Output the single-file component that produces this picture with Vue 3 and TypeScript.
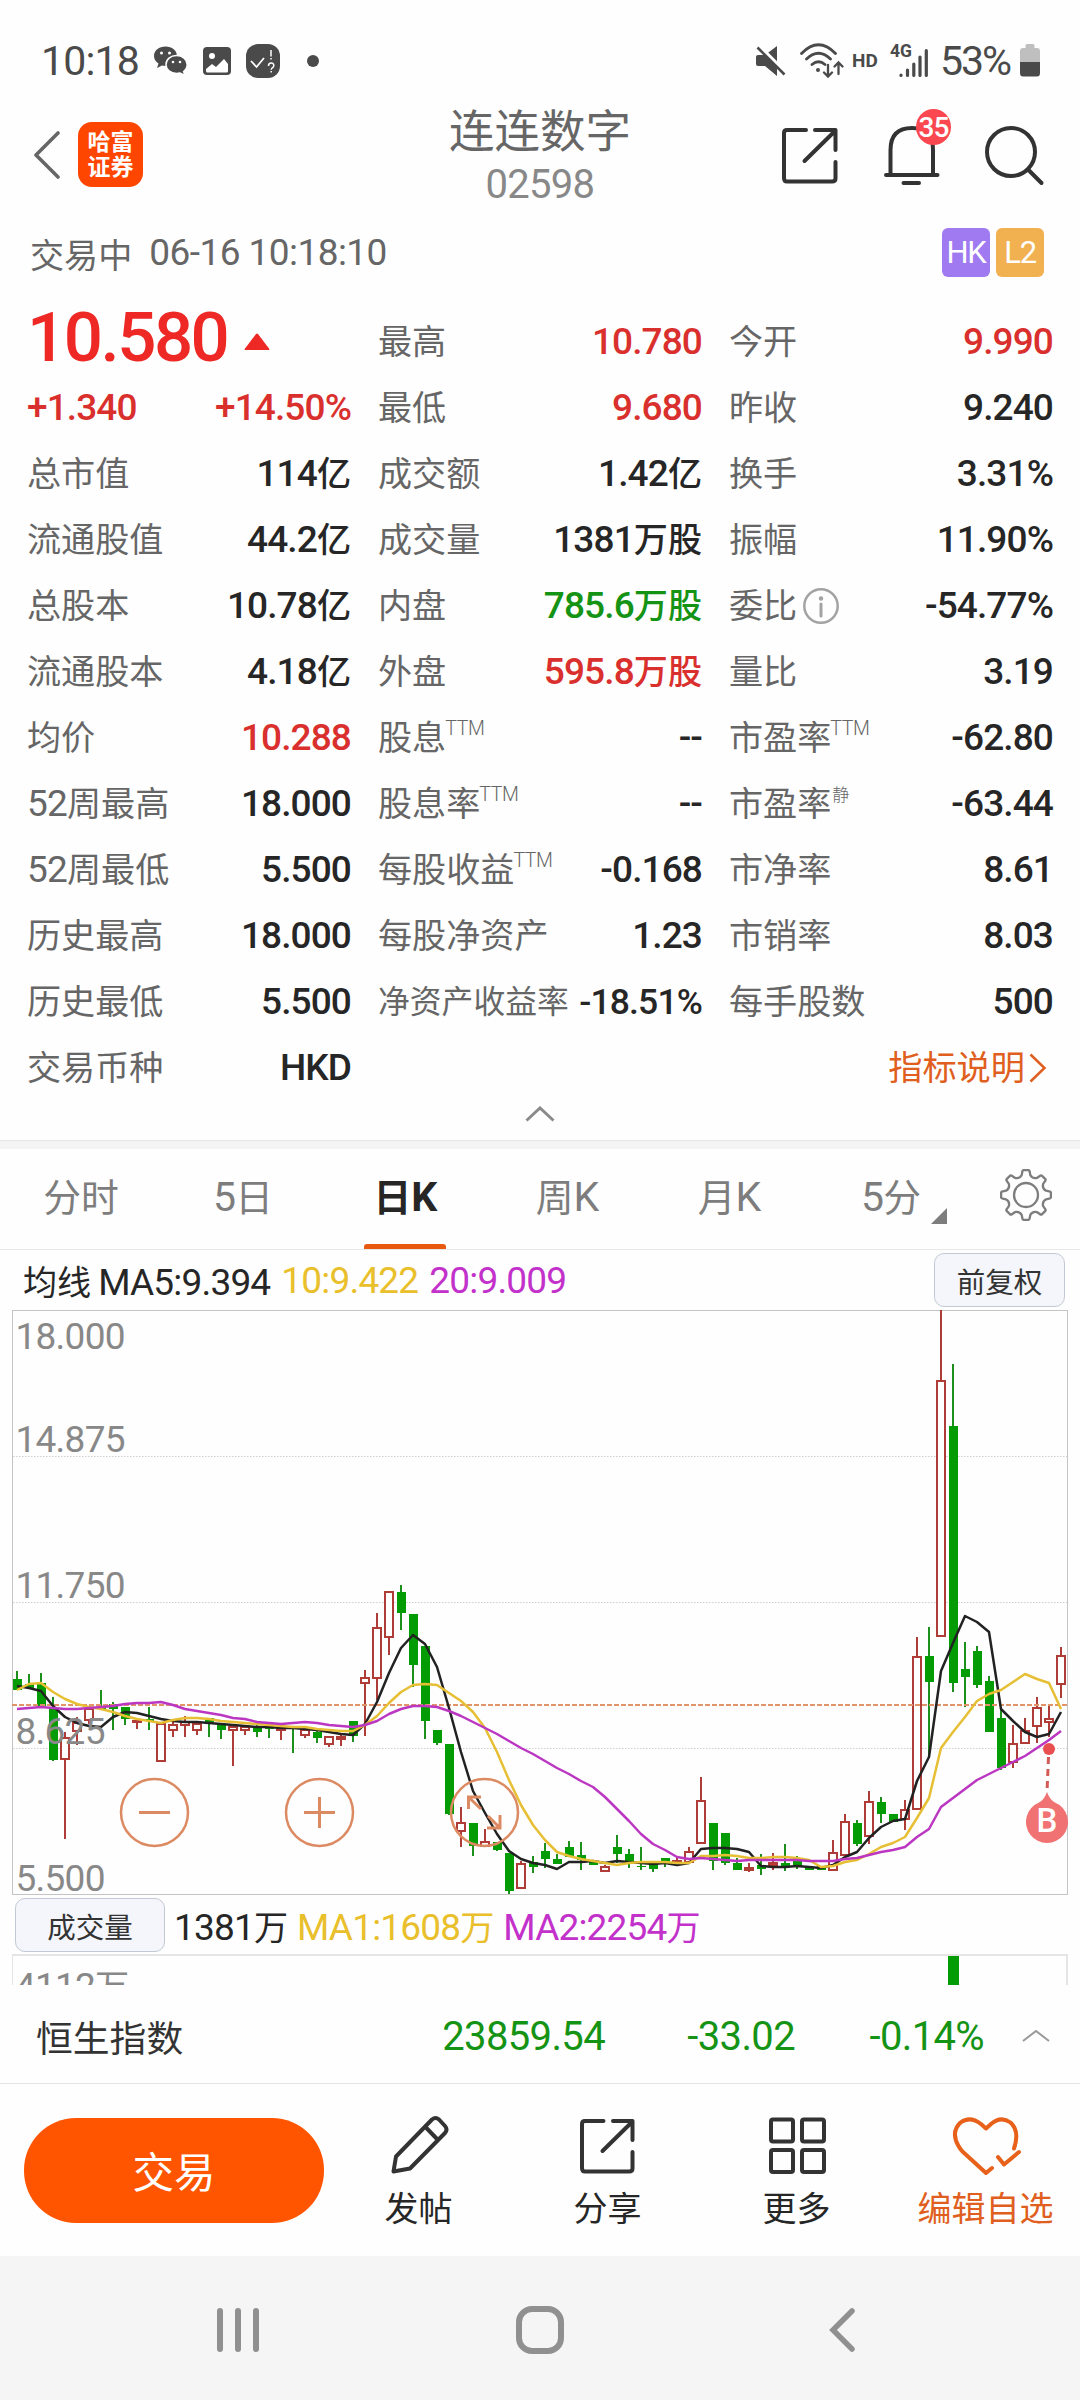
<script setup lang="ts">
import { h } from 'vue'

type Tone = 'up' | 'down' | ''
interface Cell {
  label: string
  sup?: string
  info?: boolean
  tight?: boolean
  value?: string
  tone?: Tone
}

/* Splits mixed text so that Han characters are set slightly smaller than Latin ones. */
const Mixed = (props: { t: string }) =>
  (props.t.match(/[\u2e80-\u9fff]+|[^\u2e80-\u9fff]+/g) ?? []).map((s) =>
    h('span', { class: /[\u2e80-\u9fff]/.test(s) ? 'zh' : 'en' }, s),
  )
Mixed.props = ['t']

const rows: Cell[][] = [
  [{ label: '总市值', value: '114亿' }, { label: '成交额', value: '1.42亿' }, { label: '换手', value: '3.31%' }],
  [{ label: '流通股值', value: '44.2亿' }, { label: '成交量', value: '1381万股' }, { label: '振幅', value: '11.90%' }],
  [{ label: '总股本', value: '10.78亿' }, { label: '内盘', value: '785.6万股', tone: 'down' }, { label: '委比', info: true, value: '-54.77%' }],
  [{ label: '流通股本', value: '4.18亿' }, { label: '外盘', value: '595.8万股', tone: 'up' }, { label: '量比', value: '3.19' }],
  [{ label: '均价', value: '10.288', tone: 'up' }, { label: '股息', sup: 'TTM', value: '--' }, { label: '市盈率', sup: 'TTM', value: '-62.80' }],
  [{ label: '52周最高', value: '18.000' }, { label: '股息率', sup: 'TTM', value: '--' }, { label: '市盈率', sup: '静', value: '-63.44' }],
  [{ label: '52周最低', value: '5.500' }, { label: '每股收益', sup: 'TTM', value: '-0.168' }, { label: '市净率', value: '8.61' }],
  [{ label: '历史最高', value: '18.000' }, { label: '每股净资产', value: '1.23' }, { label: '市销率', value: '8.03' }],
  [{ label: '历史最低', value: '5.500' }, { label: '净资产收益率', tight: true, value: '-18.51%' }, { label: '每手股数', value: '500' }],
]

const tabs = ['分时', '5日', '日K', '周K', '月K', '5分']

/* direction, high, body top, body bottom, low — offsets from the top of the plot */
type Candle = [string, number, number, number, number]
const candles: Candle[] = [
  ['g', 361, 369, 380, 380], ['g', 364, 374, 378, 378], ['g', 363, 373, 396, 396], ['g', 387, 399, 450, 451],
  ['r', 422, 427, 450, 529], ['r', 407, 412, 422, 435], ['r', 397, 398, 411, 414], ['g', 380, 397, 399, 399],
  ['g', 392, 394, 399, 420], ['g', 397, 397, 409, 415], ['R', 410, 410, 413, 419], ['g', 397, 409, 411, 420],
  ['r', 412, 413, 452, 452], ['r', 412, 414, 421, 427], ['r', 406, 411, 416, 427], ['r', 412, 413, 421, 425],
  ['g', 408, 408, 412, 427], ['g', 413, 414, 420, 429], ['r', 415, 416, 421, 456], ['r', 415, 416, 421, 425],
  ['g', 412, 417, 422, 427], ['g', 413, 417, 419, 428], ['r', 417, 417, 421, 430], ['g', 418, 418, 419, 443],
  ['r', 418, 419, 426, 428], ['g', 421, 422, 428, 433], ['r', 426, 426, 435, 437], ['r', 425, 426, 430, 436],
  ['g', 411, 411, 426, 432], ['r', 360, 367, 374, 426], ['r', 303, 317, 369, 390], ['r', 281, 281, 328, 345],
  ['g', 275, 282, 303, 320], ['g', 304, 304, 355, 377], ['g', 336, 336, 411, 429], ['g', 420, 420, 433, 435],
  ['g', 434, 434, 504, 505], ['r', 497, 512, 522, 537], ['g', 513, 513, 536, 546], ['r', 519, 531, 537, 537],
  ['g', 532, 532, 540, 541], ['g', 543, 543, 581, 584], ['r', 551, 553, 579, 579], ['g', 546, 552, 557, 563],
  ['g', 533, 541, 549, 558], ['g', 544, 549, 554, 554], ['g', 531, 537, 547, 547], ['g', 532, 545, 550, 560],
  ['g', 551, 551, 555, 555], ['r', 555, 556, 562, 562], ['g', 525, 537, 544, 553], ['g', 539, 544, 552, 558],
  ['g', 537, 556, 557, 560], ['g', 553, 554, 559, 562], ['g', 548, 548, 553, 557], ['R', 547, 550, 553, 553],
  ['r', 537, 541, 553, 553], ['r', 467, 490, 534, 534], ['g', 513, 513, 551, 560], ['g', 523, 523, 553, 555],
  ['g', 548, 553, 560, 560], ['R', 553, 557, 561, 562], ['g', 544, 555, 559, 565], ['R', 543, 552, 557, 560],
  ['g', 534, 553, 557, 561], ['g', 546, 550, 557, 559], ['g', 557, 557, 560, 560], ['g', 556, 556, 560, 560],
  ['r', 530, 542, 561, 561], ['r', 504, 511, 546, 546], ['g', 510, 513, 534, 536], ['r', 481, 491, 527, 534],
  ['g', 487, 492, 504, 513], ['g', 504, 504, 512, 512], ['r', 490, 499, 510, 520], ['r', 327, 346, 500, 500],
  ['g', 317, 346, 372, 447], ['r', 0, 70, 327, 327], ['g', 54, 116, 373, 382], ['g', 332, 359, 367, 397],
  ['g', 336, 341, 375, 378], ['g', 366, 371, 422, 422], ['g', 398, 408, 458, 460], ['r', 415, 433, 453, 458],
  ['r', 408, 420, 434, 434], ['r', 387, 397, 417, 433], ['r', 395, 408, 413, 427], ['r', 337, 345, 375, 388],
]

const ma5 = [376, 378, 381, 396, 407, 413, 416, 417, 407, 402, 403, 406, 409, 411, 412, 412, 413, 414, 415, 416, 417, 417, 418, 418, 419, 420, 422, 424, 425, 414, 392, 363, 338, 325, 334, 357, 398, 442, 481, 503, 524, 541, 549, 553, 555, 559, 552, 552, 551, 553, 551, 552, 553, 554, 553, 555, 553, 539, 538, 538, 539, 542, 556, 557, 557, 556, 557, 558, 555, 547, 542, 528, 517, 511, 509, 471, 447, 361, 333, 306, 312, 322, 399, 411, 422, 427, 424, 402]
const ma10 = [380, 374, 373, 382, 389, 394, 397, 399, 402, 406, 409, 411, 413, 410, 408, 408, 409, 411, 412, 413, 414, 415, 416, 417, 417, 419, 420, 421, 421, 415, 406, 393, 382, 375, 374, 375, 383, 391, 402, 418, 442, 470, 495, 515, 530, 542, 546, 549, 551, 553, 555, 553, 552, 552, 552, 553, 553, 546, 546, 545, 546, 548, 548, 547, 547, 548, 550, 557, 556, 552, 550, 544, 537, 533, 527, 508, 488, 438, 422, 407, 391, 384, 380, 372, 364, 369, 373, 399]
const ma20 = [399, 398, 397, 398, 399, 399, 398, 397, 396, 394, 393, 393, 392, 395, 399, 401, 403, 405, 408, 409, 412, 413, 414, 413, 412, 413, 415, 416, 417, 415, 411, 404, 399, 396, 396, 397, 401, 406, 412, 418, 424, 431, 438, 444, 451, 458, 464, 471, 477, 487, 499, 511, 524, 534, 540, 547, 549, 548, 549, 550, 551, 550, 550, 550, 550, 550, 551, 551, 551, 549, 548, 545, 542, 540, 537, 527, 519, 497, 488, 479, 470, 464, 458, 452, 446, 438, 430, 421]

const cx = (i: number) => 17 + 12 * i
const line = (v: number[]) => v.map((y, i) => `${cx(i)},${y}`).join(' ')

const axis = [
  { t: '18.000', y: 39 },
  { t: '14.875', y: 142 },
  { t: '11.750', y: 288 },
  { t: '8.625', y: 434 },
  { t: '5.500', y: 581 },
]

/* Eight-toothed gear outline centred on (26, 26) */
const gear = (() => {
  const p = (r: number, d: number) => {
    const a = (d * Math.PI) / 180
    return `${(26 + r * Math.sin(a)).toFixed(2)} ${(26 - r * Math.cos(a)).toFixed(2)}`
  }
  let d = ''
  for (let k = 0; k < 8; k++) {
    const a = k * 45
    d += `${k ? 'L' : 'M'}${p(20.5, a - 12)}L${p(23.5, a - 9)}Q${p(25.2, a - 8)} ${p(25, a - 5)}L${p(25, a + 5)}Q${p(25.2, a + 8)} ${p(23.5, a + 9)}L${p(20.5, a + 12)}Q${p(17.2, a + 22.5)} ${p(20.5, a + 33)}`
  }
  return d + 'Z'
})()
</script>

<template>
  <div class="screen">
    <header class="status">
      <span class="clock">10:18</span>
      <svg class="s-wechat" width="36" height="32" viewBox="0 0 36 32" fill="#4a4a4a">
        <path d="M12.500 1.500C6 1.500 1 5.600 1 11c0 3.200 1.700 5.800 4.500 7.500L4 23l5-2.500c1 .3 2.200.4 3.500.4C19 20.900 24 16.500 24 11S19 1.500 12.500 1.500Z" />
        <path d="M23.500 10.500c-6 0-10.500 4-10.500 9s4.500 9 10.500 9c1.200 0 2.400-.2 3.500-.5l5 2.500-1.400-4c2.200-1.700 3.600-4.200 3.600-7 0-5-4.700-9-10.700-9Z" stroke="#fff" stroke-width="1.500" />
        <g fill="#fff"><circle cx="8.500" cy="8" r="1.500" /><circle cx="16.500" cy="8" r="1.500" /><circle cx="20" cy="17" r="1.300" /><circle cx="27" cy="17" r="1.300" /></g>
      </svg>
      <svg class="s-pic" width="28" height="28" viewBox="0 0 28 28">
        <rect width="28" height="28" rx="4" fill="#4a4a4a" />
        <circle cx="9" cy="9" r="3" fill="#fff" />
        <path d="M3 22l6-5 4 3 8-8 4 5v7q0 1.500-1.500 1.500h-19Q3 25.500 3 24Z" fill="#fff" />
      </svg>
      <svg class="s-check" width="34" height="34" viewBox="0 0 34 34">
        <rect width="34" height="34" rx="12" fill="#4a4a4a" />
        <path d="M5 17l5.500 6L18 14" fill="none" stroke="#fff" stroke-width="1.800" />
        <path d="M25 6v6.500M25 14v1.600M22.500 22q0-3 2.700-3t2.600 2.700q0 1.300-1.600 2.300-1 .7-1 1.800M25.200 27v1.600" fill="none" stroke="#fff" stroke-width="1.500" />
      </svg>
      <i class="dot"></i>
      <div class="s-right">
        <svg class="s-mute" width="30" height="30" viewBox="0 0 30 30">
          <path d="M0 11q0-2 2-2h7L21 0v30L9 20H2q-2 0-2-2Z" fill="#4a4a4a" />
          <path d="M3 0L31 28" stroke="#fff" stroke-width="4" />
          <path d="M1.500 1.500L28.500 28.500" stroke="#4a4a4a" stroke-width="2.600" />
        </svg>
        <svg class="s-wifi" width="44" height="36" viewBox="0 0 44 36" fill="none" stroke="#4a4a4a" stroke-width="2.800" stroke-linecap="round">
          <path d="M1.500 10.500Q18.500-7 35.500 10.500M6.500 16q12-11.500 24 0M12 21.500q6.500-5.500 13 0" />
          <circle cx="18" cy="27" r="2" fill="#4a4a4a" stroke="none" />
          <path d="M28 22v11M24 29.500l4 4 4-4M38.500 31V20M34.500 23.500l4-4 4 4" stroke-width="2.300" />
        </svg>
        <span class="hd">HD</span>
        <div class="sig">
          <span class="g4">4G</span>
          <svg width="30" height="30" viewBox="0 0 30 30" stroke="#4a4a4a" stroke-width="3.200" stroke-linecap="round">
            <path d="M2 27v.5M8.500 22v5.500M14.800 16v11.500M21 9v18.500M27.300 2.500v25" />
          </svg>
        </div>
        <span class="pct">53%</span>
        <svg class="s-bat" width="20" height="33" viewBox="0 0 20 33">
          <path d="M5.500 1.500Q5.500 0 7 0h6q1.500 0 1.500 1.500V4H17q3 0 3 3v11H0V7q0-3 3-3h2.500Z" fill="#bfbfbf" />
          <path d="M0 18h20v11q0 3.500-3 3.500H3Q0 32.500 0 29Z" fill="#4a4a4a" />
        </svg>
      </div>
    </header>

    <nav class="head">
      <div class="h-left">
        <svg width="28" height="48" viewBox="0 0 28 48" fill="none" stroke="#666" stroke-width="3.600" stroke-linecap="round" stroke-linejoin="round"><path d="M25 2L3 24l22 22" /></svg>
        <div class="logo"><span>哈富</span><span>证券</span></div>
      </div>
      <div class="h-title">
        <div class="name">连连数字</div>
        <div class="code">02598</div>
      </div>
      <div class="h-right">
        <svg width="56" height="56" viewBox="0 0 56 56" fill="none" stroke="#333" stroke-width="4" stroke-linecap="round" stroke-linejoin="round"><path d="M24 2H5Q2 2 2 5V50q0 3.500 3 3.500H50q3.500 0 3.500-3V34M33 2H53.500V22M53 3L22.500 33" /></svg>
        <div class="bell">
          <svg width="56" height="60" viewBox="0 0 56 60" fill="none" stroke="#333" stroke-width="4" stroke-linecap="round"><path d="M6.500 49V24Q6.500 2 28 2T49 24V49M2 49H53.500M19.500 57H35" /></svg>
          <span class="count">35</span>
        </div>
        <svg width="60" height="60" viewBox="0 0 60 60" fill="none" stroke="#333" stroke-width="4" stroke-linecap="round"><circle cx="26" cy="26" r="24" /><path d="M43.500 44L56.500 57" /></svg>
      </div>
    </nav>

    <div class="when">
      <Mixed t="交易中" /><span class="stamp">06-16 10:18:10</span>
      <div class="badges"><b class="hk">HK</b><b class="l2">L2</b></div>
    </div>

    <section class="quote">
      <div class="row">
        <div class="cell price">
          <span class="last">10.580</span>
          <svg width="26" height="18" viewBox="0 0 26 18"><path d="M1.500 17Q0 17 1 15.500L12 1q1-1 2 0L25 15.500q1 1.500-.5 1.500Z" fill="#ee2825" /></svg>
        </div>
        <div class="cell"><span class="label">最高</span><span class="value up"><Mixed t="10.780" /></span></div>
        <div class="cell"><span class="label">今开</span><span class="value up"><Mixed t="9.990" /></span></div>
      </div>
      <div class="row">
        <div class="cell"><span class="value up"><Mixed t="+1.340" /></span><span class="value up"><Mixed t="+14.50%" /></span></div>
        <div class="cell"><span class="label">最低</span><span class="value up"><Mixed t="9.680" /></span></div>
        <div class="cell"><span class="label">昨收</span><span class="value"><Mixed t="9.240" /></span></div>
      </div>
      <div v-for="(r, i) in rows" :key="i" class="row">
        <div v-for="c in r" :key="c.label" class="cell" :class="{ tight: c.tight }">
          <span class="label"><Mixed :t="c.label" /><span v-if="c.sup" class="sup" :class="{ han: c.sup === '静' }">{{ c.sup }}</span><svg v-if="c.info" class="info" width="36" height="36" viewBox="0 0 36 36" fill="none" stroke="#a3a3a3" stroke-width="2.500"><circle cx="18" cy="18" r="16.700" /><path d="M18 16v12" stroke-width="3" stroke-linecap="round" /><circle cx="18" cy="10.500" r="2.200" fill="#a3a3a3" stroke="none" /></svg></span>
          <span class="value" :class="c.tone"><Mixed :t="c.value ?? ''" /></span>
        </div>
      </div>
      <div class="row">
        <div class="cell"><span class="label">交易币种</span><span class="value"><Mixed t="HKD" /></span></div>
        <div class="cell"></div>
        <div class="cell explain">
          <span>指标说明</span>
          <svg width="18" height="30" viewBox="0 0 18 30" fill="none" stroke="#e05f20" stroke-width="2.500"><path d="M1.500 1.500L15.500 15L1.500 28.500" /></svg>
        </div>
      </div>
      <div class="fold">
        <svg width="30" height="16" viewBox="0 0 30 16" fill="none" stroke="#8a8a8a" stroke-width="3"><path d="M1.500 14.500L15 2L28.500 14.500" /></svg>
      </div>
    </section>

    <div class="tabs">
      <div v-for="t in tabs" :key="t" class="tab" :class="{ on: t === '日K' }">
        <Mixed :t="t" />
        <svg v-if="t === '5分'" class="corner" width="16" height="16" viewBox="0 0 16 16"><path d="M16 0V16H0Z" fill="#7d7d7d" /></svg>
      </div>
      <div class="gear">
        <svg width="52" height="52" viewBox="0 0 52 52" fill="none" stroke="#7d7d7d" stroke-width="2.300" stroke-linejoin="round"><path :d="gear" /><circle cx="26" cy="26" r="12" /></svg>
      </div>
    </div>

    <div class="legend">
      <span class="k"><Mixed t="均线" /><span class="en sp">MA5:9.394</span></span>
      <span class="en y">10:9.422</span>
      <span class="en m">20:9.009</span>
      <button class="pill adj">前复权</button>
    </div>

    <svg class="plot" width="1080" height="586" viewBox="0 0 1080 586">
      <rect x="12.500" y="0.500" width="1055" height="584" fill="none" stroke="#c4c4c4" />
      <g stroke="#cfcfcf" stroke-dasharray="1.500 1.500"><path d="M13 146.500H1067M13 292.500H1067M13 438.500H1067" /></g>
      <g v-for="(c, i) in candles" :key="i">
        <template v-if="c[0] === 'g'">
          <rect :x="cx(i) - 1" :y="c[1]" width="2" :height="c[4] - c[1]" fill="#1c8f1c" />
          <rect :x="cx(i) - 4" :y="c[2]" width="9" :height="c[3] - c[2]" fill="#049c04" />
        </template>
        <template v-else>
          <rect :x="cx(i) - 1" :y="c[1]" width="2" :height="c[2] - c[1]" fill="#b03c38" />
          <rect :x="cx(i) - 1" :y="c[3]" width="2" :height="c[4] - c[3]" fill="#b03c38" />
          <rect :x="cx(i) - 4" :y="c[2] + 1" width="8" :height="c[3] - c[2] - 2" :fill="c[0] === 'R' ? '#c93531' : '#fff'" stroke="#b03c38" stroke-width="2" />
        </template>
      </g>
      <path d="M12 395H1067" stroke="#e09468" stroke-width="2" stroke-dasharray="5 2" />
      <g fill="none" stroke-width="2.500" stroke-linejoin="round">
        <polyline :points="line(ma5)" stroke="#222" />
        <polyline :points="line(ma10)" stroke="#e6bf35" />
        <polyline :points="line(ma20)" stroke="#bb37c2" />
      </g>
      <text v-for="a in axis" :key="a.t" x="15.500" :y="a.y" class="tick">{{ a.t }}</text>
      <g fill="none" stroke="#dc8a62" stroke-width="2.500">
        <circle cx="154.500" cy="502.500" r="33.500" />
        <path d="M139 502.500H170" stroke-width="3" />
        <circle cx="319.500" cy="502.500" r="33.500" />
        <path d="M304 502.500H335M319.500 487V518" stroke-width="3" />
        <circle cx="484.500" cy="502.500" r="33.500" />
        <path d="M468.500 499V487H481M469.500 488L481 499M500 505V518H487M499 517L488 506" stroke-width="3" />
      </g>
      <circle cx="1049" cy="439" r="6" fill="#e94f4f" />
      <path d="M1048.500 447L1047 482" stroke="#d35a55" stroke-width="3" stroke-dasharray="7 5" />
      <path d="M1047 482Q1050 490 1055 492.500A21 21 0 1 1 1039 492.500Q1044 490 1047 482Z" fill="#f07272" />
      <text x="1047" y="522" class="mark">B</text>
    </svg>

    <div class="legend vol">
      <button class="pill">成交量</button>
      <span class="k"><Mixed t="1381万" /></span>
      <span class="y"><Mixed t="MA1:1608万" /></span>
      <span class="m"><Mixed t="MA2:2254万" /></span>
    </div>

    <div class="volplot">
      <span class="cap"><Mixed t="4112万" /></span>
      <i class="bar"></i>
    </div>

    <div class="index">
      <span class="iname">恒生指数</span>
      <span class="n1">23859.54</span>
      <span class="n2">-33.02</span>
      <span class="n3">-0.14%</span>
      <svg width="28" height="14" viewBox="0 0 28 14" fill="none" stroke="#999" stroke-width="2"><path d="M1 12L14 2L27 12" /></svg>
    </div>

    <footer class="actions">
      <button class="trade">交易</button>
      <div class="act">
        <svg width="60" height="62" viewBox="0 0 60 62" fill="none" stroke="#333" stroke-width="4" stroke-linejoin="round"><path d="M4.500 57.500L7 42.500L43 5.500Q46.500 2.500 50 5.500L56 12Q59 15.500 56 19L21 54.500ZM36 12.500L48.500 25.500" /></svg>
        <span>发帖</span>
      </div>
      <div class="act">
        <svg width="60" height="62" viewBox="0 0 60 62" fill="none" stroke="#333" stroke-width="4" stroke-linecap="round" stroke-linejoin="round"><path d="M25.500 7H7Q4 7 4 10V54q0 3.500 3 3.500H51q3.500 0 3.500-3V38M35 7H54.500V26M54 8L24.500 37" /></svg>
        <span>分享</span>
      </div>
      <div class="act">
        <svg width="60" height="62" viewBox="0 0 60 62" fill="none" stroke="#333" stroke-width="4"><rect x="4" y="5.500" width="22" height="22" rx="2" /><rect x="35" y="5.500" width="22" height="22" rx="2" /><rect x="4" y="36" width="22" height="22" rx="2" /><rect x="35" y="36" width="22" height="22" rx="2" /></svg>
        <span>更多</span>
      </div>
      <div class="act hot">
        <svg width="72" height="62" viewBox="0 0 72 62" fill="none" stroke="#e8611a" stroke-width="4" stroke-linecap="round" stroke-linejoin="round"><path d="M64 34.500Q70 17 60.500 8.500Q51 1.500 41 10L36 14.500L31 10Q20 1.500 10.500 8.500Q.5 18 8.500 32Q10 35 13 38L36 59L42 54M48 43L54 50.500L69 38" /></svg>
        <span>编辑自选</span>
      </div>
    </footer>

    <div class="sysnav">
      <svg width="44" height="48" viewBox="0 0 44 48" stroke="#909090" stroke-width="6" stroke-linecap="round"><path d="M4 5V43M22 5V43M40 5V43" /></svg>
      <svg width="50" height="50" viewBox="0 0 50 50" fill="none" stroke="#909090" stroke-width="6"><rect x="4" y="4" width="42" height="42" rx="13" /></svg>
      <svg class="s-back" width="32" height="48" viewBox="0 0 32 48" fill="none" stroke="#909090" stroke-width="5.500" stroke-linecap="round" stroke-linejoin="miter"><path d="M26 5L7 24L26 43" /></svg>
    </div>
  </div>
</template>

<style>
body {
  background: #fff;
}
.zh {
  font-size: 0.922em;
}
.en {
  letter-spacing: -0.022em;
}
</style>

<style scoped>
.screen {
  width: 1080px;
  height: 2400px;
  overflow: hidden;
  display: flex;
  flex-direction: column;
  background: #fefefe;
  color: #666;
  font-family: Roboto, 'Noto Sans CJK SC', sans-serif;
  font-size: 37px;
  white-space: pre;
}
svg {
  flex: none;
  display: block;
}
button {
  font-family: inherit;
  border: 0;
  padding: 0;
}

.status {
  height: 100px;
  padding: 21px 40px 0 41px;
  box-sizing: border-box;
  display: flex;
  align-items: center;
  color: #4a4a4a;
}
.clock {
  font-size: 41px;
  letter-spacing: -0.02em;
  width: 112px;
}
.s-pic {
  margin-left: 14px;
}
.s-check {
  margin-left: 15px;
}
.dot {
  width: 12px;
  height: 12px;
  border-radius: 50%;
  background: #4a4a4a;
  margin-left: 27px;
}
.s-right {
  margin-left: auto;
  display: flex;
  align-items: center;
}
.s-wifi {
  margin-left: 14px;
}
.hd {
  font-size: 19px;
  font-weight: 700;
  margin-left: 8px;
  width: 38px;
}
.sig {
  position: relative;
  width: 39px;
  height: 34px;
  display: flex;
  align-items: flex-end;
  justify-content: flex-end;
}
.g4 {
  position: absolute;
  left: 0;
  top: -3px;
  font-size: 17.500px;
  line-height: 20px;
  font-weight: 700;
}
.pct {
  font-size: 41px;
  letter-spacing: -0.05em;
  margin-left: 11px;
  width: 80px;
}

.head {
  height: 112px;
  display: flex;
  justify-content: space-between;
}
.h-left,
.h-right {
  width: 300px;
  display: flex;
  align-items: center;
}
.h-left {
  padding: 0 0 3px 33px;
  box-sizing: border-box;
}
.logo {
  margin-left: 17px;
  width: 65px;
  height: 65px;
  border-radius: 14px;
  background: #ff4600;
  color: #fff;
  font-size: 23px;
  font-weight: 700;
  line-height: 25px;
  display: flex;
  flex-direction: column;
  align-items: center;
  justify-content: center;
}
.h-title {
  text-align: center;
}
.name {
  font-size: 45.500px;
  line-height: 52px;
  padding-top: 7px;
}
.code {
  font-size: 40px;
  line-height: 52px;
  letter-spacing: -0.018em;
  color: #888;
}
.h-right {
  justify-content: flex-end;
  padding-right: 35px;
  box-sizing: border-box;
  gap: 46px;
}
.bell {
  position: relative;
  margin-right: -1px;
}
.count {
  position: absolute;
  left: 32px;
  top: -17px;
  width: 35px;
  height: 36px;
  border-radius: 50%;
  background: #fb4850;
  color: #fff;
  font-size: 28px;
  font-weight: 500;
  line-height: 37px;
  letter-spacing: -0.03em;
  text-align: center;
}

.when {
  height: 84px;
  box-sizing: border-box;
  padding: 0 36px 3px 30px;
  display: flex;
  align-items: center;
}
.stamp {
  margin-left: 17px;
  letter-spacing: -0.015em;
}
.badges {
  margin-left: auto;
  display: flex;
  gap: 6px;
}
.badges b {
  width: 48px;
  height: 49px;
  border-radius: 6px;
  color: #fff;
  font-size: 31px;
  font-weight: 400;
  line-height: 50px;
  text-align: center;
  letter-spacing: -0.04em;
}
.hk {
  background: #a07af0;
}
.l2 {
  background: #f1b150;
}

.quote {
  height: 845px;
  padding-top: 13px;
  box-sizing: border-box;
  border-bottom: 1px solid #e6e6e6;
}
.row {
  height: 66px;
  padding: 0 27px;
  display: grid;
  grid-template-columns: repeat(3, 324px);
  column-gap: 27px;
}
.cell {
  display: flex;
  align-items: center;
  justify-content: space-between;
  line-height: 66px;
}
.label {
  display: flex;
  align-items: center;
  font-size: 37px;
}
.row .cell > .label:not(:has(span)) {
  font-size: 34.100px;
}
.value {
  color: #262626;
  font-weight: 500;
}
.value :deep(.en) {
  letter-spacing: -0.024em;
}
.up {
  color: #d9302e;
}
.down {
  color: #159315;
}
.tight {
  font-size: 35.500px;
}
.tight .label {
  font-size: 34.500px;
}
.sup {
  font-size: 19.500px;
  font-weight: 300;
  line-height: 20px;
  letter-spacing: -0.02em;
  align-self: flex-start;
  margin: 14px 0 0 -1px;
}
.sup.han {
  font-size: 17px;
  margin-left: 1px;
}
.info {
  margin-left: 6px;
}
.price {
  justify-content: flex-start;
}
.last {
  color: #ee2825;
  font-size: 69px;
  font-weight: 500;
  letter-spacing: -0.036em;
  margin: -8px 0 0 0;
}
.price svg {
  margin: 0 0 0 17px;
}
.explain {
  justify-content: flex-end;
  color: #e05f20;
  font-size: 34.200px;
}
.explain svg {
  margin: 0 6px 0 4px;
}
.fold {
  height: 26px;
  display: flex;
  align-items: center;
  justify-content: center;
}

.tabs {
  border-top: 8px solid #f4f4f4;
  border-bottom: 1px solid #e8e8e8;
  height: 100px;
  display: flex;
  font-size: 41px;
  color: #7d7d7d;
}
.tab {
  position: relative;
  width: 162px;
  line-height: 96px;
  text-align: center;
}
.on {
  color: #262626;
  font-weight: 700;
}
.on::after {
  content: '';
  position: absolute;
  left: 40px;
  bottom: 0;
  width: 82px;
  height: 5px;
  border-radius: 3px 3px 0 0;
  background: #e8590f;
}
.corner {
  position: absolute;
  right: 25px;
  bottom: 25px;
}
.gear {
  flex: 1;
  display: flex;
  justify-content: center;
  padding: 20px 1px 0 0;
}

.legend {
  height: 60px;
  padding: 0 15px 0 23px;
  display: flex;
  align-items: center;
  gap: 11px;
}
.k {
  color: #262626;
}
.sp {
  margin-left: 7px;
}
.y {
  color: #e9bf2c;
}
.m {
  color: #c231ca;
}
.pill {
  width: 150px;
  height: 54px;
  box-sizing: border-box;
  border: 1px solid #c3c9d4;
  border-radius: 10px;
  background: #f4f6fb;
  color: #333;
  font-size: 28.500px;
}
.adj {
  width: 131px;
  margin-left: auto;
}
.vol {
  height: 58px;
  padding-left: 15px;
  gap: 9px;
}
.plot {
  overflow: visible;
}
.tick {
  font-size: 37px;
  letter-spacing: -0.02em;
  fill: #888;
}
.mark {
  font-size: 33px;
  font-weight: 500;
  fill: #fff;
  text-anchor: middle;
}

.volplot {
  position: relative;
  height: 29px;
  margin: 0 12px;
  border: 2px solid #e5e5e5;
  border-width: 2px 2px 0 1px;
  overflow: hidden;
  color: #888;
}
.cap {
  position: absolute;
  left: 2px;
  top: 9px;
  line-height: 44px;
}
.bar {
  position: absolute;
  left: 935px;
  top: -2px;
  width: 11px;
  height: 40px;
  background: #049c04;
}

.index {
  height: 99px;
  box-sizing: border-box;
  border-bottom: 1px solid #e5e5e5;
  padding: 4px 30px 0 36px;
  display: flex;
  align-items: center;
  font-size: 40px;
  letter-spacing: -0.016em;
  color: #159315;
}
.iname {
  font-size: 36.800px;
  letter-spacing: 0;
  color: #333;
}
.n1 {
  flex: 1;
  text-align: right;
}
.n2 {
  width: 190px;
  text-align: right;
}
.n3 {
  width: 189px;
  text-align: right;
}
.index svg {
  margin-left: 38px;
}

.actions {
  height: 172px;
  display: flex;
  align-items: center;
}
.trade {
  width: 300px;
  height: 105px;
  margin-left: 24px;
  border-radius: 52px;
  background: #ff5500;
  color: #fff;
  font-size: 41.500px;
}
.act {
  width: 189px;
  padding-top: 8px;
  display: flex;
  flex-direction: column;
  align-items: center;
  gap: 8px;
  font-size: 34px;
  line-height: 50px;
  color: #262626;
}
.hot {
  color: #e05f20;
}

.sysnav {
  height: 144px;
  padding: 4px 0 0 216px;
  box-sizing: border-box;
  background: #f5f5f5;
  display: flex;
  align-items: center;
  gap: 255px;
}
.s-back {
  margin-left: 6px;
}
</style>
